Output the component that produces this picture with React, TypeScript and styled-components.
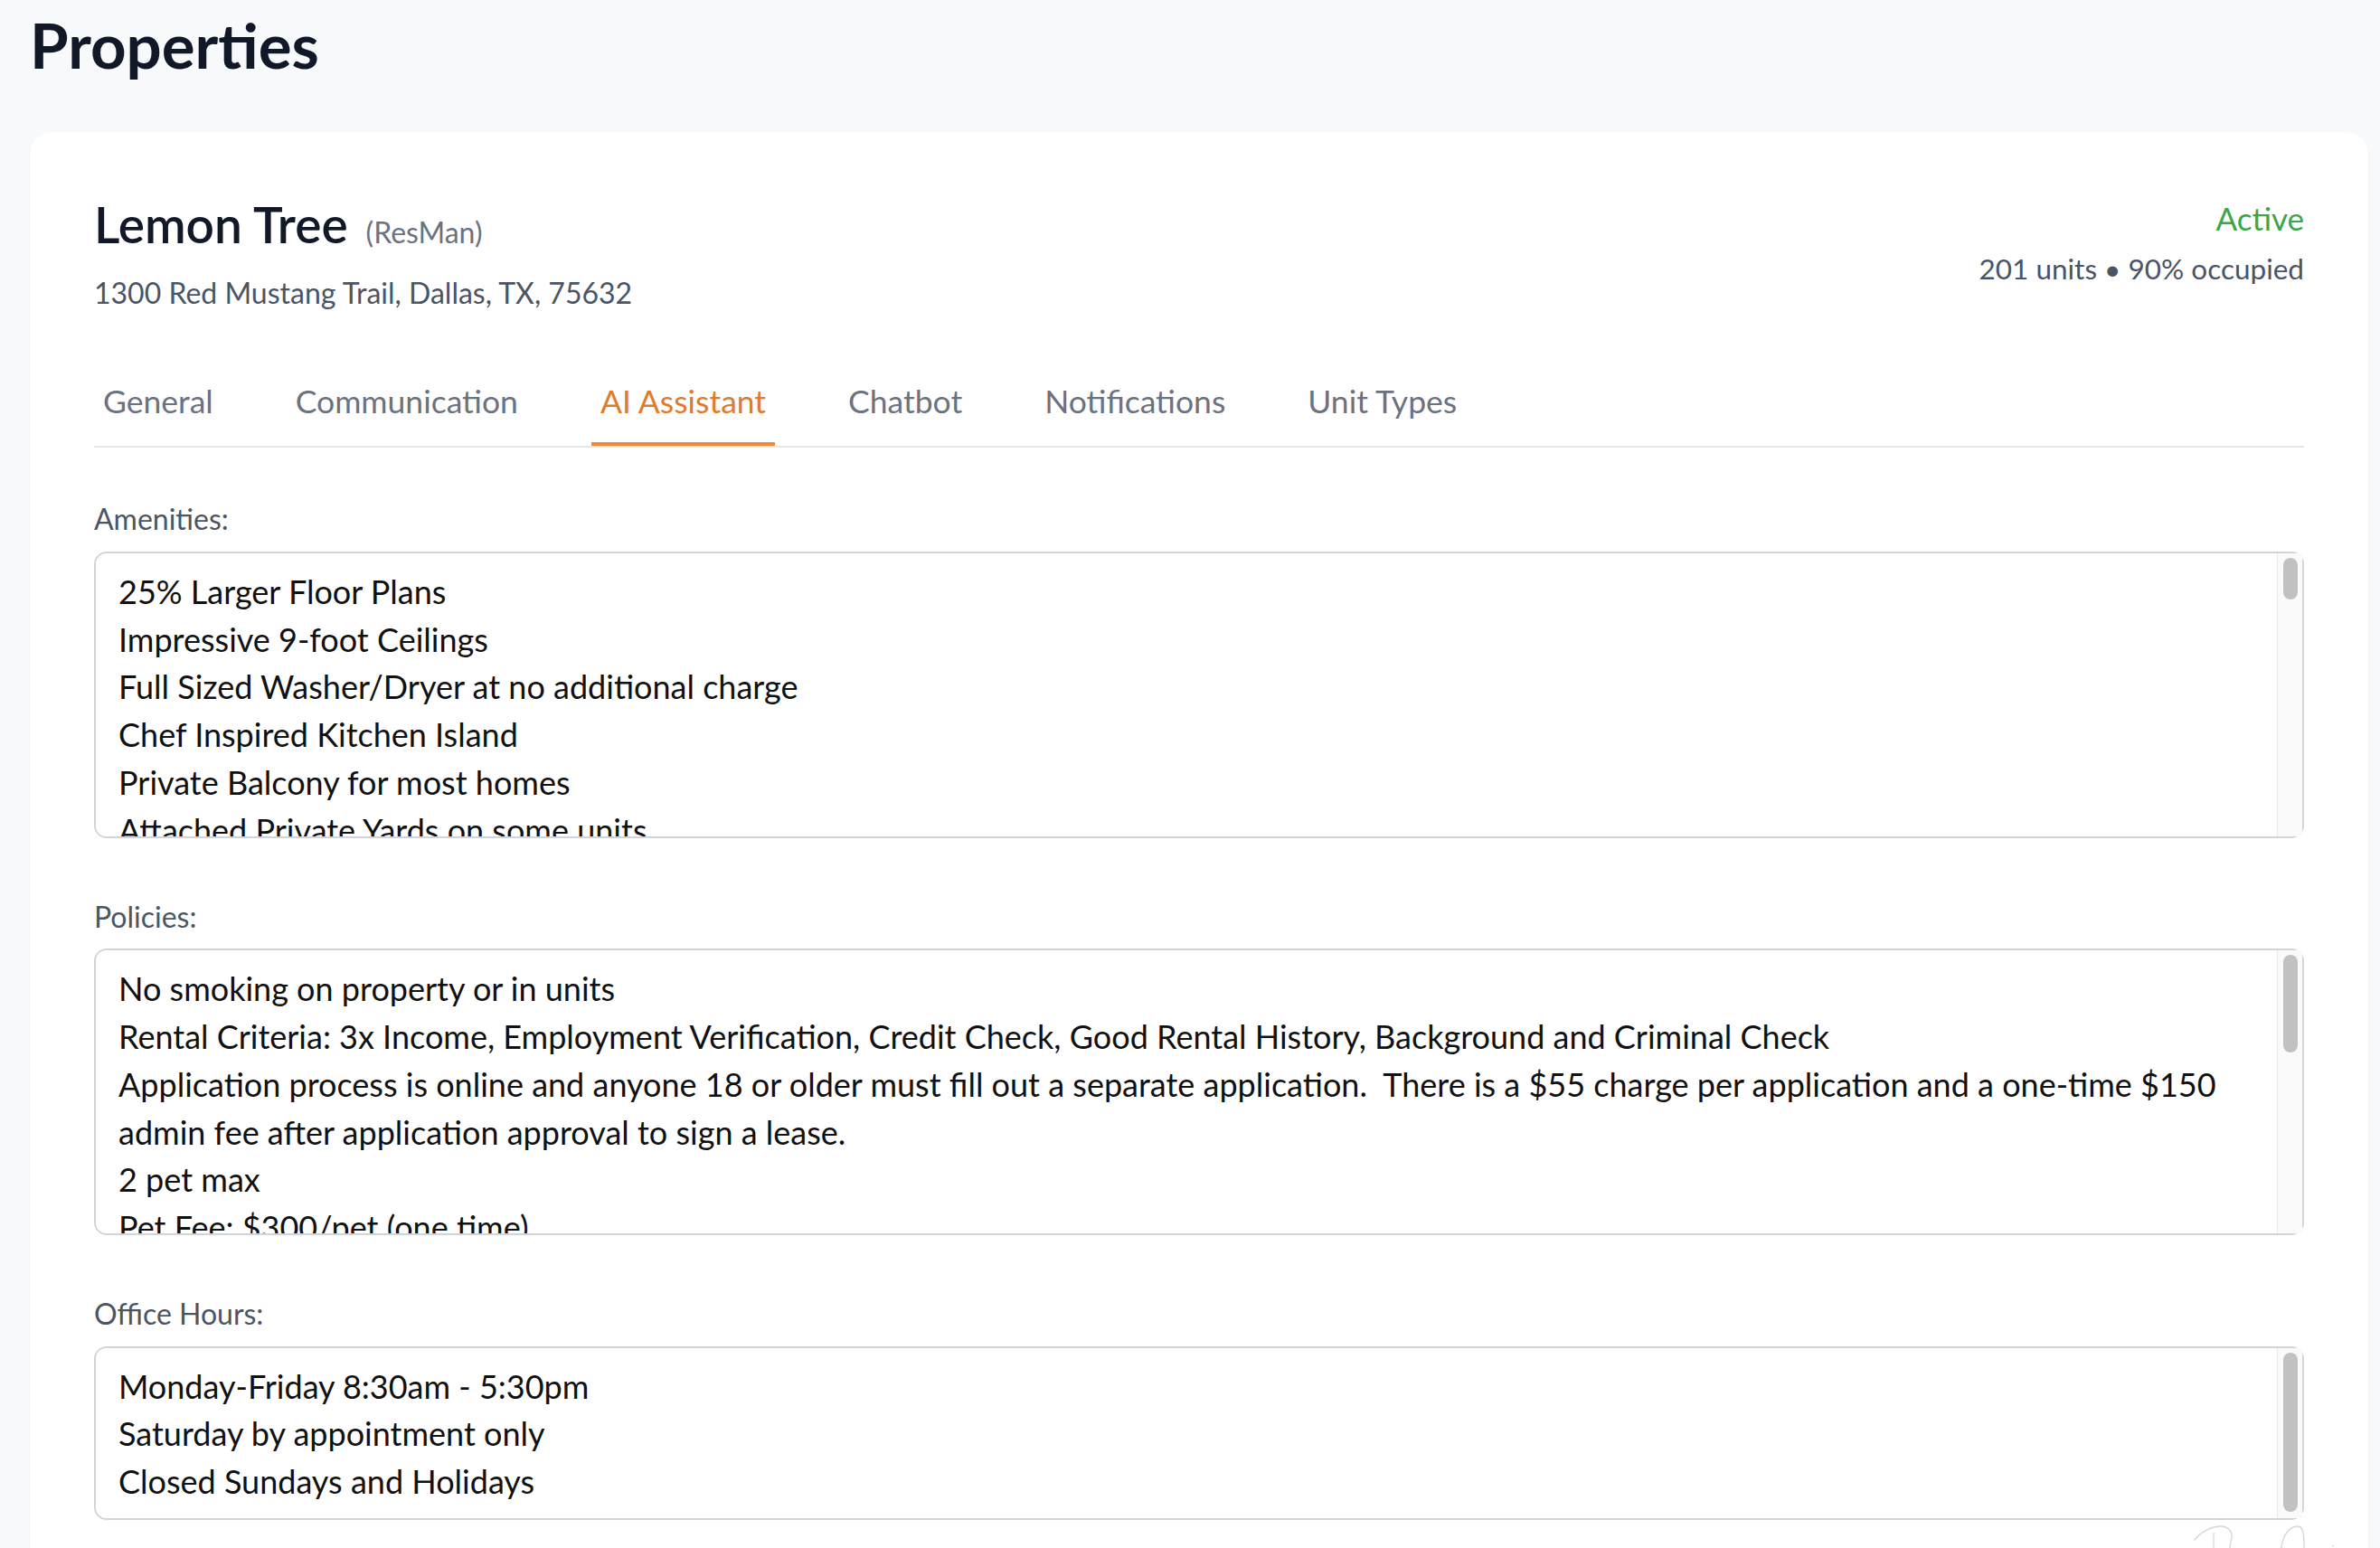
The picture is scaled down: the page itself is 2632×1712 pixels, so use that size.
import React, { useLayoutEffect, useRef, useState } from "react";
import styled, { createGlobalStyle } from "styled-components";

const GlobalStyle = createGlobalStyle`
  html, body {
    margin: 0;
    padding: 0;
    overflow: hidden;
    background-color: #f8f9fb;
  }

  body {
    font-family: Lato, "Noto Sans", sans-serif;
    color: #111827;
  }

  * {
    box-sizing: border-box;
  }
`;

const Page = styled.main`
  position: relative;
  min-height: 1712px;
  padding: 9px 13px 0 33px;
`;

const PageTitle = styled.h1`
  margin: 0 0 56px;
  font-size: 69px;
  font-weight: 700;
  line-height: 81px;
  color: #111827;
`;

const Card = styled.section`
  background-color: #ffffff;
  border-radius: 24px;
  box-shadow: 0 1px 3px rgba(15, 23, 42, 0.06);
  padding: 69px 71px 80px;
`;

const Header = styled.div`
  display: flex;
  justify-content: space-between;
  align-items: flex-start;
`;

const NameRow = styled.div`
  display: flex;
  align-items: baseline;
  gap: 20px;
`;

const PropertyName = styled.h2`
  margin: 0;
  font-size: 55px;
  font-weight: 600;
  line-height: 1.2;
  color: #111827;
`;

const Source = styled.span`
  font-size: 32px;
  color: #6b7280;
`;

const Address = styled.p`
  margin: 24px 0 0;
  font-size: 32px;
  line-height: 1.2;
  color: #4b5563;
`;

const Status = styled.div`
  padding-top: 5px;
  text-align: right;
`;

interface StatusLabelProps {
  $active: boolean;
}

const StatusLabel = styled.div<StatusLabelProps>`
  font-size: 35px;
  line-height: 1.2;
  color: ${(props) => (props.$active ? "#3ba64a" : "#9ca3af")};
`;

const Occupancy = styled.div`
  margin-top: 17px;
  font-size: 31.5px;
  line-height: 1.2;
  color: #4a5468;
`;

const TabList = styled.nav`
  display: flex;
  gap: 71px;
  margin-top: 80px;
  border-bottom: 2px solid #e5e7eb;
`;

interface TabProps {
  $active?: boolean;
}

const Tab = styled.button<TabProps>`
  font-family: inherit;
  font-size: 35.5px;
  line-height: 42px;
  background: none;
  border: 0;
  border-bottom: 4px solid
    ${(props) => (props.$active ? "#ef8a36" : "transparent")};
  padding: 0 10px 24px;
  color: ${(props) => (props.$active ? "#e07b2c" : "#6b7280")};
  cursor: pointer;
`;

const FieldList = styled.div`
  display: flex;
  flex-direction: column;
  gap: 68px;
  margin-top: 60px;
`;

const Field = styled.label`
  display: flex;
  flex-direction: column;
`;

const FieldLabel = styled.span`
  margin-bottom: 16px;
  font-size: 32px;
  line-height: 1.2;
  color: #4b5563;
`;

const TextAreaBox = styled.div`
  position: relative;
`;

interface TextAreaProps {
  $height: number;
}

const TextArea = styled.textarea<TextAreaProps>`
  display: block;
  width: 100%;
  height: ${(props) => props.$height}px;
  border: 2px solid #d1d5db;
  border-radius: 14px;
  padding: 16px 53px 16px 25px;
  font-family: inherit;
  font-size: 36px;
  line-height: 52.8px;
  color: #111111;
  background-color: #ffffff;
  resize: none;
  overflow-y: auto;
  outline: none;
  scrollbar-width: none;

  &::-webkit-scrollbar {
    display: none;
  }
`;

const ScrollTrack = styled.div`
  position: absolute;
  top: 2px;
  right: 2px;
  bottom: 2px;
  width: 28px;
  background-color: #fafafa;
  border-left: 1px solid #e8e8e8;
  pointer-events: none;
`;

const ScrollThumb = styled.div`
  position: absolute;
  left: 6px;
  width: 16px;
  border-radius: 8px;
  background-color: #c1c1c1;
`;

const Signature = styled.svg`
  position: absolute;
  left: 2420px;
  top: 1680px;
  width: 190px;
  height: 32px;
  pointer-events: none;
`;

const amenities = [
  "25% Larger Floor Plans",
  "Impressive 9-foot Ceilings",
  "Full Sized Washer/Dryer at no additional charge",
  "Chef Inspired Kitchen Island",
  "Private Balcony for most homes",
  "Attached Private Yards on some units",
  "Stainless Steel Appliances",
  "Granite Countertops",
  "Walk-in Closets",
  "Ceiling Fans",
  "Wood-style Plank Flooring",
  "Garden Soaking Tubs",
  "Detached Garages Available",
  "Resort-style Swimming Pool",
  "24-hour Fitness Center",
  "Clubhouse with Coffee Bar",
  "Business Center",
  "Package Lockers",
  "Dog Park",
  "Pet Washing Station",
  "Playground",
  "Grilling Stations and Picnic Areas",
  "Gated Community",
  "Controlled Access Entry",
  "On-site Maintenance",
  "On-site Management",
  "Covered Parking",
  "Electric Vehicle Charging Stations",
  "Online Rent Payment",
  "Valet Trash Service",
  "Near Shopping and Dining",
  "Close to Major Highways",
  "Smoke-free Community",
  "High-speed Internet Available",
  "Energy Efficient Windows",
  "Keyless Entry",
  "USB Outlets",
  "Kitchen Pantry",
].join("\n");

const policies = [
  "No smoking on property or in units",
  "Rental Criteria: 3x Income, Employment Verification, Credit Check, Good Rental History, Background and Criminal Check",
  "Application process is online and anyone 18 or older must fill out a separate application.  There is a $55 charge per application and a one-time $150 admin fee after application approval to sign a lease.",
  "2 pet max",
  "Pet Fee: $300/pet (one time)",
  "Pet Rent: $25/pet per month",
  "Breed restrictions apply",
  "Weight limit: 75 lbs combined",
  "Renters insurance required",
  "Security deposit starts at $300",
  "Lease terms: 6-15 months",
  "Quiet hours 10pm - 8am",
  "Trash must be placed in designated areas",
  "Guests staying longer than 14 days must be added to the lease",
  "60-day notice required to vacate",
].join("\n");

const officeHours = [
  "Monday-Friday 8:30am - 5:30pm",
  "Saturday by appointment only",
  "Closed Sundays and Holidays",
].join("\n");

const tabs = [
  "General",
  "Communication",
  "AI Assistant",
  "Chatbot",
  "Notifications",
  "Unit Types",
];

const fields = [
  { label: "Amenities:", value: amenities, height: 317 },
  { label: "Policies:", value: policies, height: 317 },
  { label: "Office Hours:", value: officeHours, height: 192 },
];

interface ScrollAreaProps {
  value: string;
  height: number;
}

// textarea with a drawn scrollbar, the thumb follows the real scroll position
const ScrollArea = ({ value, height }: ScrollAreaProps) => {
  const ref = useRef<HTMLTextAreaElement>(null);
  const [thumb, setThumb] = useState({ top: 5, size: 0 });

  const measure = () => {
    const el = ref.current;
    if (!el) return;
    const track = el.clientHeight - 10;
    const ratio = el.clientHeight / el.scrollHeight;
    if (ratio >= 1) {
      setThumb({ top: 5, size: 0 });
      return;
    }
    const size = Math.max(24, track * ratio);
    const maxScroll = el.scrollHeight - el.clientHeight;
    const top = 5 + (el.scrollTop / maxScroll) * (track - size);
    setThumb({ top, size });
  };

  useLayoutEffect(() => {
    measure();
    document.fonts?.ready.then(measure);
  }, [value]);

  return (
    <TextAreaBox>
      <TextArea
        ref={ref}
        $height={height}
        defaultValue={value}
        onScroll={measure}
        onInput={measure}
      />
      <ScrollTrack>
        {thumb.size > 0 && (
          <ScrollThumb style={{ top: thumb.top, height: thumb.size }} />
        )}
      </ScrollTrack>
    </TextAreaBox>
  );
};

const App = () => {
  const [activeTab, setActiveTab] = useState("AI Assistant");

  return (
    <Page>
      <GlobalStyle />
      <PageTitle>Properties</PageTitle>

      <Card>
        <Header>
          <div>
            <NameRow>
              <PropertyName>Lemon Tree</PropertyName>
              <Source>(ResMan)</Source>
            </NameRow>
            <Address>1300 Red Mustang Trail, Dallas, TX, 75632</Address>
          </div>
          <Status>
            <StatusLabel $active>Active</StatusLabel>
            <Occupancy>201 units • 90% occupied</Occupancy>
          </Status>
        </Header>

        <TabList>
          {tabs.map((tab) => (
            <Tab
              key={tab}
              type="button"
              $active={tab === activeTab}
              onClick={() => setActiveTab(tab)}
            >
              {tab}
            </Tab>
          ))}
        </TabList>

        <FieldList>
          {fields.map((field) => (
            <Field key={field.label}>
              <FieldLabel>{field.label}</FieldLabel>
              <ScrollArea value={field.value} height={field.height} />
            </Field>
          ))}
        </FieldList>
      </Card>

      {/* faint handwriting peeking in at the bottom corner */}
      <Signature viewBox="0 0 190 32" fill="none">
        <path
          d="M7 23 C14 14 26 8 36 8 C44 8 49 14 48 20 C47 25 46 29 46 32"
          stroke="#d6d6d6"
          strokeWidth="1.3"
          strokeLinecap="round"
        />
        <path d="M28 15 L28 32" stroke="#d6d6d6" strokeWidth="1.3" />
        <path
          d="M103 32 C104 18 112 8 121 8 C127 8 128 16 128 32"
          stroke="#d6d6d6"
          strokeWidth="1.3"
          strokeLinecap="round"
        />
        <path d="M159 30 L161 29" stroke="#d6d6d6" strokeWidth="1.3" />
      </Signature>
    </Page>
  );
};

export default App;
